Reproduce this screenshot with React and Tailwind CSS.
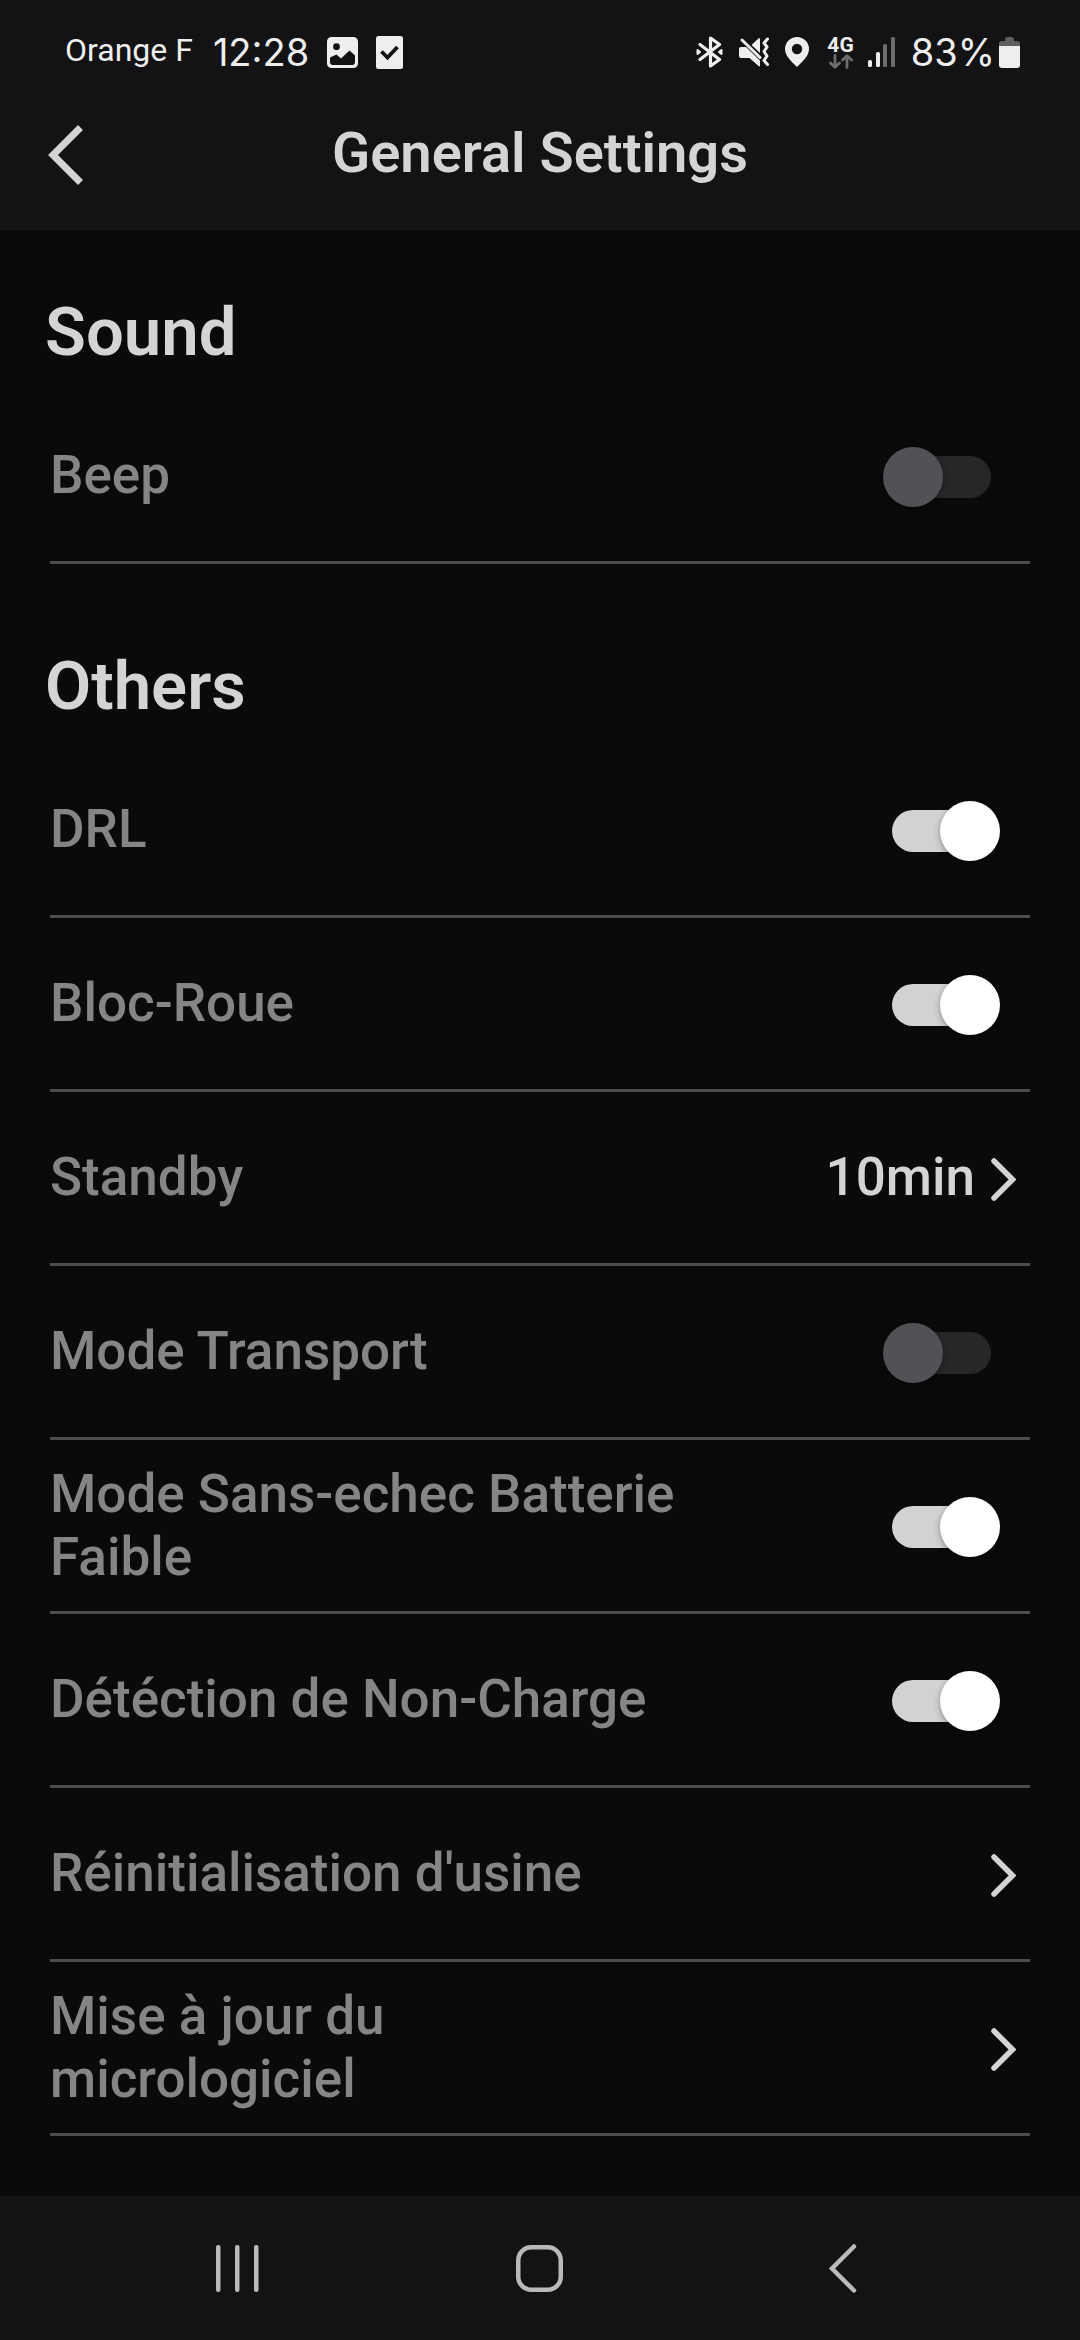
import { useState } from 'react'

const SOUND_ITEMS = [{ id: 'beep', label: 'Beep', type: 'switch' }]

const OTHER_ITEMS = [
  { id: 'drl', label: 'DRL', type: 'switch' },
  { id: 'blocRoue', label: 'Bloc-Roue', type: 'switch' },
  { id: 'standby', label: 'Standby', type: 'link', value: '10min' },
  { id: 'transport', label: 'Mode Transport', type: 'switch' },
  { id: 'batterie', label: 'Mode Sans-echec Batterie Faible', type: 'switch' },
  { id: 'nonCharge', label: 'Détéction de Non-Charge', type: 'switch' },
  { id: 'reset', label: "Réinitialisation d'usine", type: 'link' },
  { id: 'firmware', label: 'Mise à jour du micrologiciel', type: 'link' },
]

const rowClass = "flex w-full h-[174px] items-center justify-between border-b-3 border-[#4d4d4f] text-left text-[53px] leading-[63px] font-medium"
const labelClass = "max-w-[632px] text-[#858585]"

function StatusBar() {
  return (
    <div className="flex h-[104px] items-center justify-between pl-[65px] pr-[60px] text-[#eeeeee]">
      <div className="flex items-center">
        <span className="pb-1 text-[32px] leading-10">Orange F</span>
        <span className="ml-5 font-[Inter,sans-serif] text-[38px] leading-10">12:28</span>
        <svg className="ml-[18px]" width="31" height="31" viewBox="0 0 31 31">
          <path
            fill="currentColor"
            fillRule="evenodd"
            d="M4.500 0h22a4.500 4.500 0 0 1 4.500 4.500v22a4.500 4.500 0 0 1-4.500 4.500h-22a4.500 4.500 0 0 1-4.500-4.500v-22a4.500 4.500 0 0 1 4.500-4.500zM9.500 6.300a3.400 3.400 0 1 0 0 6.800a3.400 3.400 0 1 0 0-6.800zM3 20.500v4.500a3 3 0 0 0 3 3h19a3 3 0 0 0 3-3v-6.500l-5.500-5l-8.500 8l-4.500-4z"
          />
        </svg>
        <svg className="ml-[18px]" width="27" height="33" viewBox="0 0 27 33">
          <rect width="27" height="33" rx="2.500" fill="currentColor" />
          <path d="M5.500 15.500l6 6l10-10.500" fill="none" stroke="#131315" strokeWidth="3.800" />
        </svg>
      </div>

      <div className="flex items-center">
        <svg width="27" height="32" viewBox="0 0 27 32" fill="none" stroke="currentColor" strokeWidth="3.200" strokeLinejoin="round" strokeLinecap="round">
          <path d="M4 8.500l19.500 15l-9 6.500v-28l9 6.500l-19.500 15" />
          <path d="M1.500 14v4l2.500-2zM25.500 14v4l-2.500-2z" strokeWidth="2" fill="currentColor" />
        </svg>
        <svg className="ml-4" width="30" height="30" viewBox="0 0 30 30">
          <path fill="currentColor" d="M2 10h5l14 13.500v5q0 1.500-1.500 .5l-9-8h-8.500q-2 0-2-2v-7q0-2 2-2z" />
          <path fill="currentColor" d="M12.500 8l7-6.500q1.500-1 1.500 .5v14z" />
          <path d="M3 3l18 17.500" stroke="currentColor" strokeWidth="3" strokeLinecap="round" />
          <path d="M28.500 2l-3.500 4l3 4l-3 4.500l3 4.500l-3 4.500l3.500 4" fill="none" stroke="currentColor" strokeWidth="3" strokeLinecap="round" strokeLinejoin="round" />
        </svg>
        <svg className="ml-4" width="24" height="30" viewBox="0 0 24 30">
          <path fill="currentColor" fillRule="evenodd" d="M12 0a12 12 0 0 1 12 12c0 6.500-5 11-12 18c-7-7-12-11.500-12-18a12 12 0 0 1 12-12zM12 6.800a5.200 5.200 0 1 0 0 10.400a5.200 5.200 0 1 0 0-10.400z" />
        </svg>
        <div className="ml-[18px] flex flex-col items-center">
          <span className="text-[21px] leading-[18px] font-bold">4G</span>
          <svg width="24" height="15" viewBox="0 0 24 15" fill="none" stroke="#6e6e70" strokeWidth="2.800" strokeLinecap="round" strokeLinejoin="round">
            <path d="M6 1.500v11.500M1.500 9l4.500 4.300l4.500-4.300M18 13.500v-11.500M13.500 6l4.500-4.300l4.500 4.300" />
          </svg>
        </div>
        <svg className="ml-[14px]" width="27" height="30" viewBox="0 0 27 30">
          <rect x="0" y="23" width="4" height="7" rx="1.500" fill="currentColor" />
          <rect x="8" y="15" width="4" height="15" rx="1.500" fill="currentColor" />
          <rect x="15" y="7" width="4" height="23" rx="1.500" fill="#6e6e70" />
          <rect x="23" y="0" width="4" height="30" rx="1.500" fill="#6e6e70" />
        </svg>
        <span className="ml-4 font-[Inter,sans-serif] text-[38px] leading-10">83%</span>
        <svg className="ml-1" width="21" height="31" viewBox="0 0 21 31">
          <path fill="#5f5f61" d="M6 3q0-3 3-3h3q3 0 3 3v1h3q3 0 3 3v3h-21v-3q0-3 3-3h3z" />
          <path fill="currentColor" d="M0 9h21v19q0 3-3 3h-15q-3 0-3-3z" />
        </svg>
      </div>
    </div>
  )
}

function Chevron() {
  return (
    <svg className="mt-[3px]" width="25" height="43" viewBox="0 0 25 43" fill="none" stroke="#d4d4d4" strokeWidth="5.500" strokeLinecap="round">
      <path d="M3 3l18.500 18.500l-18.500 18.500" />
    </svg>
  )
}

function SettingRow({ item, checked, onToggle }) {
  if (item.type === 'switch') {
    return (
      <label className={rowClass}>
        <span className={labelClass}>{item.label}</span>
        <input
          type="checkbox"
          role="switch"
          checked={checked}
          onChange={() => onToggle(item.id)}
          className="relative mt-[3px] mr-[39px] h-[42px] w-[99px] shrink-0 appearance-none rounded-full bg-[#272729] before:absolute before:-top-[9px] before:-left-[9px] before:size-[60px] before:rounded-full before:bg-[#525156] before:shadow-[0_2px_6px_rgba(0,0,0,0.35)] checked:bg-[#d2d2d2] checked:before:left-[48px] checked:before:bg-white"
        />
      </label>
    )
  }

  return (
    <button type="button" className={rowClass}>
      <span className={labelClass}>{item.label}</span>
      <span className="flex items-center gap-4 pr-[14px] text-[#d4d4d4]">
        {item.value}
        <Chevron />
      </span>
    </button>
  )
}

function App() {
  const [values, setValues] = useState({
    beep: false,
    drl: true,
    blocRoue: true,
    transport: false,
    batterie: true,
    nonCharge: true,
  })

  function toggle(id) {
    setValues({ ...values, [id]: !values[id] })
  }

  const headingClass = "-ml-[5px] pb-[18px] text-[67px] leading-[80px] font-semibold text-[#d4d4d4]"

  return (
    <div className="flex min-h-screen flex-col bg-[#0a0a0a] font-[Roboto,sans-serif]">
      <header className="bg-[#131315] pb-6">
        <StatusBar />
        <div className="grid h-[102px] grid-cols-[36px_1fr_36px] items-center px-12">
          <button type="button" aria-label="Back">
            <svg width="36" height="60" viewBox="0 0 36 60" fill="none" stroke="#d4d4d4" strokeWidth="7">
              <path d="M32.500 2.500l-27.500 27.500l27.500 27.500" />
            </svg>
          </button>
          <h1 className="pb-1 text-center text-[56px] leading-[66px] font-semibold text-[#d4d4d4]">General Settings</h1>
        </div>
      </header>

      <main className="flex-1 px-[50px]">
        <section className="pt-[62px]">
          <h2 className={headingClass}>Sound</h2>
          {SOUND_ITEMS.map((item) => (
            <SettingRow key={item.id} item={item} checked={values[item.id]} onToggle={toggle} />
          ))}
        </section>

        <section className="pt-[82px]">
          <h2 className={headingClass}>Others</h2>
          {OTHER_ITEMS.map((item) => (
            <SettingRow key={item.id} item={item} checked={values[item.id]} onToggle={toggle} />
          ))}
        </section>
      </main>

      <nav className="grid h-[144px] grid-cols-3 place-items-center bg-[#131315] px-[86px]">
        <button type="button" aria-label="Recent apps">
          <svg width="43" height="47" viewBox="0 0 43 47" fill="#b9b9bb">
            <rect x="0" width="4.500" height="47" rx="2" />
            <rect x="19" width="4.500" height="47" rx="2" />
            <rect x="38" width="4.500" height="47" rx="2" />
          </svg>
        </button>
        <button type="button" aria-label="Home">
          <svg width="47" height="47" viewBox="0 0 47 47" fill="none" stroke="#b9b9bb" strokeWidth="4.500">
            <rect x="2.250" y="2.250" width="42.500" height="42.500" rx="13" />
          </svg>
        </button>
        <button type="button" aria-label="Navigate back">
          <svg width="28" height="49" viewBox="0 0 28 49" fill="none" stroke="#b9b9bb" strokeWidth="4.500" strokeLinecap="round">
            <path d="M25 2.500l-22 22l22 22" />
          </svg>
        </button>
      </nav>
    </div>
  )
}

export default App
